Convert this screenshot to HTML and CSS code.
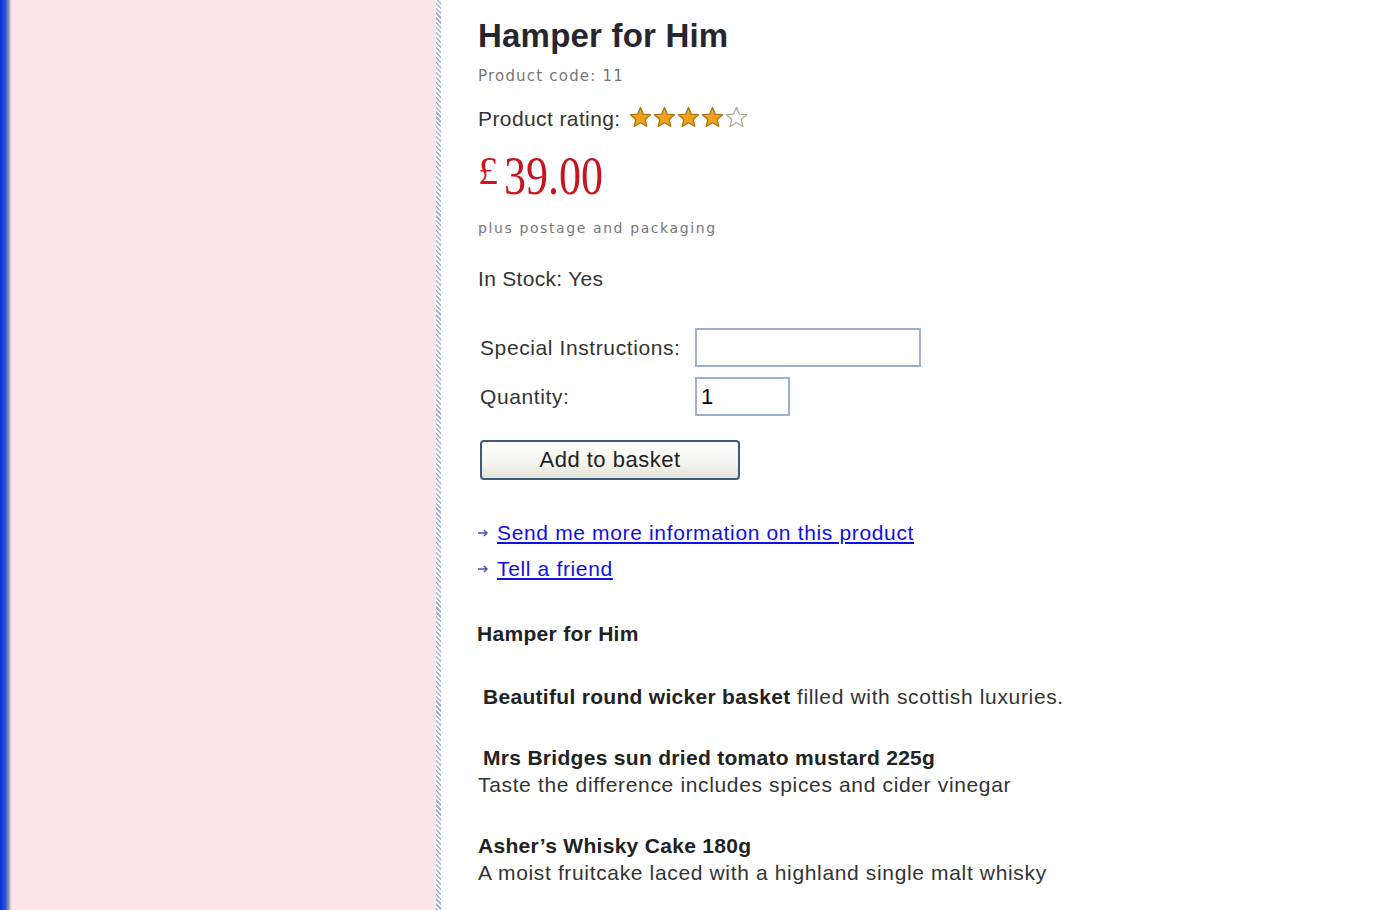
FILE: index.html
```html
<!DOCTYPE html>
<html>

<head>
    <meta charset="utf-8">
    <title>Hamper for Him</title>
    <link rel="stylesheet" href="styles.css">
</head>

<body>
    <div class="page">
        <div class="frame-edge"></div>
        <div class="sidebar"></div>
        <div class="divider"></div>

        <div class="product">
            <h1 class="product-title">Hamper for Him</h1>
            <div class="product-code">Product code: 11</div>

            <div class="rating">
                <span>Product rating:</span>
                <span class="stars">
                    <svg class="star" viewBox="0 0 24 24"><path d="M12 1.5l3.1 7 7.4.6-5.6 4.9 1.7 7.4L12 17.5l-6.6 3.9 1.7-7.4L1.5 9.1l7.4-.6z" /></svg>
                    <svg class="star" viewBox="0 0 24 24"><path d="M12 1.5l3.1 7 7.4.6-5.6 4.9 1.7 7.4L12 17.5l-6.6 3.9 1.7-7.4L1.5 9.1l7.4-.6z" /></svg>
                    <svg class="star" viewBox="0 0 24 24"><path d="M12 1.5l3.1 7 7.4.6-5.6 4.9 1.7 7.4L12 17.5l-6.6 3.9 1.7-7.4L1.5 9.1l7.4-.6z" /></svg>
                    <svg class="star" viewBox="0 0 24 24"><path d="M12 1.5l3.1 7 7.4.6-5.6 4.9 1.7 7.4L12 17.5l-6.6 3.9 1.7-7.4L1.5 9.1l7.4-.6z" /></svg>
                    <svg class="star empty" viewBox="0 0 24 24"><path d="M12 1.5l3.1 7 7.4.6-5.6 4.9 1.7 7.4L12 17.5l-6.6 3.9 1.7-7.4L1.5 9.1l7.4-.6z" /></svg>
                </span>
            </div>

            <div class="price"><span class="currency">£</span><span class="amount">39.00</span></div>
            <div class="postage">plus postage and packaging</div>

            <div class="stock">In Stock: Yes</div>

            <form class="order-form" onsubmit="return false">
                <div class="form-row">
                    <label class="form-label" for="instructions">Special Instructions:</label>
                    <input class="text-input wide" type="text" id="instructions">
                </div>
                <div class="form-row">
                    <label class="form-label" for="quantity">Quantity:</label>
                    <input class="text-input short" type="text" id="quantity" value="1">
                </div>
                <button class="basket-button" type="submit">Add to basket</button>
            </form>

            <ul class="product-links">
                <li><svg class="arrow" viewBox="0 0 11 8"><path d="M0 4h9M6 1l3 3-3 3" /></svg><a href="#">Send me more information on this product</a></li>
                <li><svg class="arrow" viewBox="0 0 11 8"><path d="M0 4h9M6 1l3 3-3 3" /></svg><a href="#">Tell a friend</a></li>
            </ul>

            <div class="description">
                <h2 class="desc-title">Hamper for Him</h2>
                <p class="desc-intro"><b>Beautiful round wicker basket</b> filled with scottish luxuries.</p>
                <p class="desc-item"><b class="indent">Mrs Bridges sun dried tomato mustard 225g</b><br>Taste the difference includes spices and cider vinegar</p>
                <p class="desc-item"><b>Asher’s Whisky Cake 180g</b><br>A moist fruitcake laced with a highland single malt whisky</p>
            </div>
        </div>
    </div>
</body>

</html>
```

FILE: styles.css
```css
* {
    box-sizing: border-box;
    margin: 0;
    padding: 0;
}

body {
    background-color: #fff;
    color: #333;
    font-family: "Liberation Sans", Arial, sans-serif;
}

.page {
    display: flex;
    min-height: 910px;
}

.frame-edge {
    background: linear-gradient(to right, #0a2fd6 0, #2a55ea 6px, #6c7f9c 7px, #8e96a0 9px, #c9ccd2 10px, #e9e9ec 12px);
    flex: 0 0 12px;
}

.sidebar {
    background-color: #ffe4e9;
    flex: 0 0 424px;
}

.divider {
    background-image: repeating-linear-gradient(45deg, #a9b3d8 0, #a9b3d8 1.5px, #fff 1.5px, #fff 3.5px);
    flex: 0 0 5px;
}

.product {
    flex: 1;
    padding: 17px 0 0 37px;
}

.product-title {
    color: #26262e;
    font-size: 33px;
    font-weight: bold;
    letter-spacing: 0.2px;
    line-height: 38px;
}

.product-code {
    color: #777;
    font-family: "DejaVu Sans", Verdana, sans-serif;
    font-size: 15px;
    letter-spacing: 1.2px;
    line-height: 18px;
    margin-top: 12px;
}

.rating {
    align-items: center;
    display: flex;
    font-size: 21px;
    letter-spacing: 0.4px;
    line-height: 26px;
    margin-top: 21px;
}

.stars {
    display: flex;
    margin-left: 8px;
    margin-top: -3px;
}

.star {
    height: 23px;
    margin-right: 1px;
    width: 23px;
}

.star path {
    fill: #f0a21c;
    stroke: #a4741c;
    stroke-width: 1.3;
    stroke-linejoin: round;
}

.star.empty path {
    fill: #fff;
    stroke: #b0a890;
}

.price {
    color: #c8141e;
    font-family: "Liberation Serif", "Times New Roman", serif;
    line-height: 54px;
    margin-top: 17px;
}

.currency {
    font-size: 40px;
    letter-spacing: 6px;
    line-height: 44px;
    vertical-align: top;
}

.amount {
    display: inline-block;
    font-size: 55px;
    transform: scaleX(0.8);
    transform-origin: left center;
}

.postage {
    color: #777;
    font-family: "DejaVu Sans", Verdana, sans-serif;
    font-size: 14px;
    letter-spacing: 1.6px;
    line-height: 18px;
    margin-top: 3px;
}

.stock {
    font-size: 21px;
    letter-spacing: 0.3px;
    line-height: 26px;
    margin-top: 29px;
}

.order-form {
    margin-top: 36px;
}

.form-row {
    align-items: center;
    display: flex;
    margin-bottom: 10px;
}

.form-label {
    flex: 0 0 217px;
    font-size: 21px;
    letter-spacing: 0.6px;
    padding-left: 2px;
}

.text-input {
    border: 2px solid #9cb0cf;
    font-family: "Liberation Sans", Arial, sans-serif;
    font-size: 22px;
    height: 39px;
    padding: 0 4px;
}

.text-input.wide {
    width: 226px;
}

.text-input.short {
    width: 95px;
}

.basket-button {
    background: linear-gradient(#ffffff, #f4f4ee 60%, #e2e2d8);
    border: 2px solid #3e5c7a;
    border-radius: 4px;
    color: #222;
    cursor: pointer;
    font-family: "Liberation Sans", Arial, sans-serif;
    font-size: 22px;
    height: 40px;
    letter-spacing: 0.5px;
    margin-left: 2px;
    margin-top: 14px;
    width: 260px;
}

.product-links {
    list-style: none;
    margin-top: 35px;
}

.product-links li {
    align-items: center;
    display: flex;
    font-size: 21px;
    height: 36px;
    letter-spacing: 0.65px;
}

.arrow {
    fill: none;
    height: 8px;
    margin-right: 8px;
    stroke: #3a50c8;
    stroke-width: 1.4;
    width: 11px;
}

.product-links a {
    color: #1010e6;
}

.description {
    margin-top: 34px;
}

.desc-title {
    color: #222;
    font-size: 21px;
    font-weight: bold;
    letter-spacing: 0.3px;
    line-height: 26px;
    margin-left: -1px;
}

.desc-intro,
.desc-item {
    font-size: 21px;
    letter-spacing: 0.65px;
    line-height: 27px;
    margin-top: 36px;
}

.desc-item {
    margin-top: 34px;
}

.desc-intro {
    padding-left: 5px;
}

.desc-intro b,
.desc-item b {
    color: #222;
    letter-spacing: 0.3px;
}

.indent {
    padding-left: 5px;
}
```
